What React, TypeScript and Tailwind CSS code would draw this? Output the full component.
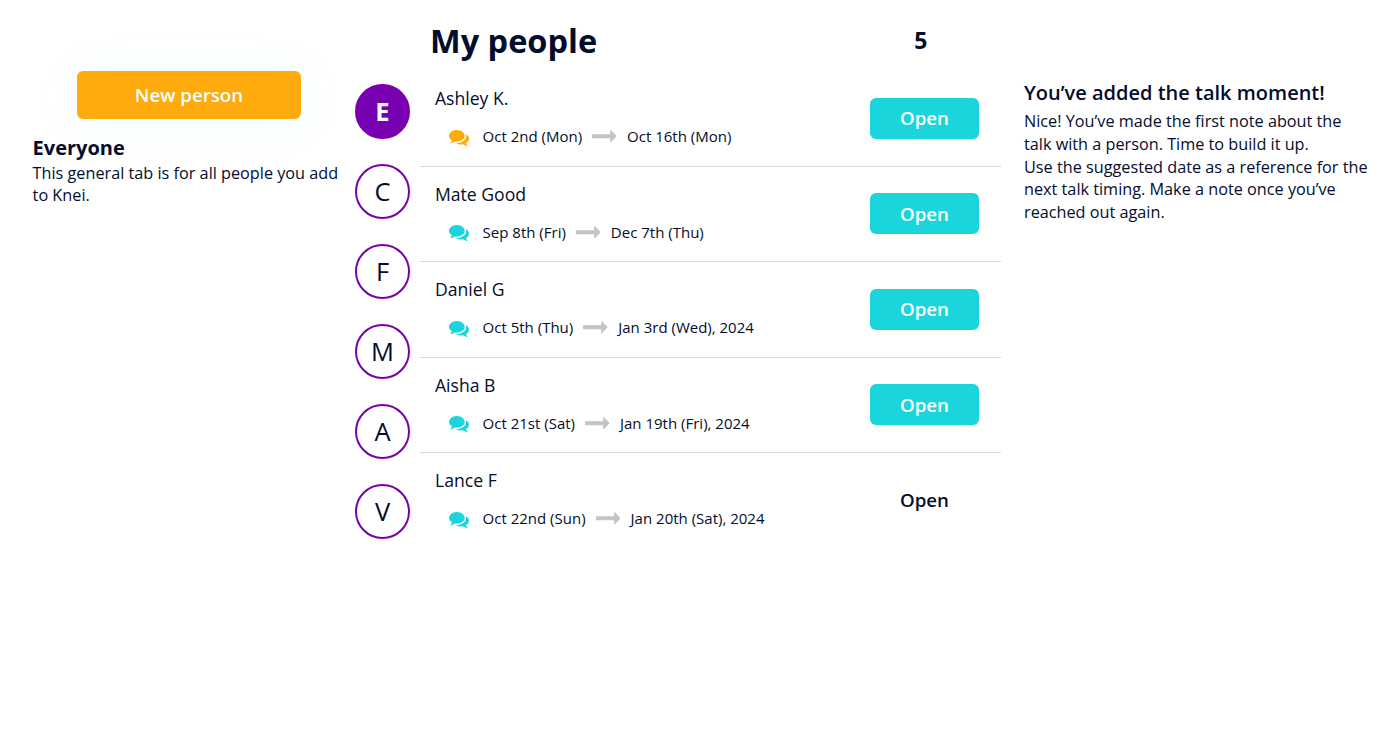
import type { ReactNode } from 'react';
import clsx from 'clsx';

interface Person {
  name: string;
  last: string;
  next: string;
  overdue?: boolean;
  plain?: boolean;
}

const groups = ['E', 'C', 'F', 'M', 'A', 'V'];

const people: Person[] = [
  { name: 'Ashley K.', last: 'Oct 2nd (Mon)', next: 'Oct 16th (Mon)', overdue: true },
  { name: 'Mate Good', last: 'Sep 8th (Fri)', next: 'Dec 7th (Thu)' },
  { name: 'Daniel G', last: 'Oct 5th (Thu)', next: 'Jan 3rd (Wed), 2024' },
  { name: 'Aisha B', last: 'Oct 21st (Sat)', next: 'Jan 19th (Fri), 2024' },
  { name: 'Lance F', last: 'Oct 22nd (Sun)', next: 'Jan 20th (Sat), 2024', plain: true },
];

function Icon({ className, viewBox, children }: { className?: string; viewBox: string; children: ReactNode }) {
  return (
    <svg className={className} fill="currentColor" viewBox={viewBox} preserveAspectRatio="none">
      {children}
    </svg>
  );
}

function CommentsIcon({ className }: { className?: string }) {
  return (
    <Icon className={className} viewBox="0 256 1792 1408">
      <path d="M1408 768q0 139-94 257t-256.5 186.5-353.5 68.5q-86 0-176-16-124 88-278 128-36 9-86 16h-3q-11 0-20.5-8t-11.5-21q-1-3-1-6.5t.5-6.5 2-6l2.5-5 3.5-5.5 4-5 4.5-5 4-4.5q5-6 23-25t26-29.5 22.5-29 25-38.5 20.5-44q-124-72-195-177t-71-224q0-139 94-257t256.5-186.5 353.5-68.5 353.5 68.5 256.5 186.5 94 257zm384 256q0 120-71 224.5t-195 176.5q10 24 20.5 44t25 38.5 22.5 29 26 29.5 23 25q1 1 4 4.5t4.5 5 4 5 3.5 5.5l2.5 5 2 6 .5 6.5-1 6.5q-3 14-13 22t-22 7q-50-7-86-16-154-40-278-128-90 16-176 16-271 0-472-132 58 4 88 4 161 0 309-45t264-129q125-92 192-212t67-254q0-77-23-152 129 71 204 178t75 230z" />
    </Icon>
  );
}

function ArrowIcon({ className }: { className?: string }) {
  return (
    <Icon className={className} viewBox="0 512 1728 768">
      <path d="M1728 893q0 14-10 24l-384 354q-16 14-35 6-19-9-19-29v-224h-1248q-14 0-23-9t-9-23v-192q0-14 9-23t23-9h1248v-224q0-21 19-29t35 5l384 350q10 10 10 23z" />
    </Icon>
  );
}

function PersonRow({ person }: { person: Person }) {
  return (
    <li className="flex h-[95.5px] items-center border-b border-[#d9d9e0] pr-[22px] pl-[15px] last:border-transparent">
      <div className="flex-1 pb-[3.1px]">
        <h3 className="text-[17.6px] leading-6">{person.name}</h3>
        <div className="mt-[15px] flex items-center pl-[14px] text-[15px] leading-[22px]">
          <CommentsIcon
            className={clsx('mt-[3px] mr-[13.6px] h-4 w-5', person.overdue ? 'text-[#ffaa0d]' : 'text-[#1ad5dc]')}
          />
          <span>{person.last}</span>
          <ArrowIcon className="mt-px mr-[10.5px] ml-[10px] h-[12.5px] w-[24.5px] text-[#c4c4c4]" />
          <span>{person.next}</span>
        </div>
      </div>
      <button
        type="button"
        className={clsx(
          'h-[41px] w-[109px] rounded-md text-[18.7px] font-semibold',
          person.plain ? 'text-[#040d2c]' : 'bg-[#1ad5dc] text-white',
        )}
      >
        Open
      </button>
    </li>
  );
}

export default function App() {
  return (
    <div className="flex min-h-[747px] bg-white font-['Open_Sans',sans-serif] text-[#040d2c]">
      <aside className="w-[355px] pt-[71px] pl-[32.6px]">
        <button
          type="button"
          className="ml-[44.4px] block h-12 w-56 rounded-md bg-[#ffaa0d] text-[18.7px] font-semibold text-white shadow-[0_4px_50px_rgba(26,213,220,0.06)]"
        >
          New person
        </button>
        <h2 className="mt-[15px] text-xl leading-7 font-bold">Everyone</h2>
        <p className="w-[315px] text-[16.24px] leading-[22px]">This general tab is for all people you add to Knei.</p>
      </aside>

      <nav className="flex w-[65px] flex-col gap-[25px] pt-[84px]">
        {groups.map((letter, i) => (
          <button
            key={letter}
            type="button"
            className={clsx(
              'h-[55px] w-[55px] rounded-full border-2 border-[#7700b0] pb-px text-[25.5px]',
              i === 0 && 'bg-[#7700b0] font-bold text-white',
            )}
          >
            {letter}
          </button>
        ))}
      </nav>

      <main className="w-[581px]">
        <header className="flex h-[71px] items-center justify-between pt-[10px] pr-[73.5px] pl-[10px]">
          <h1 className="text-[32.5px] leading-[46px] font-bold">My people</h1>
          <span className="pb-px text-[23px] font-bold">{people.length}</span>
        </header>
        <ul>
          {people.map((p) => (
            <PersonRow key={p.name} person={p} />
          ))}
        </ul>
      </main>

      <aside className="w-[380px] pt-[79px] pl-[23px]">
        <h2 className="text-xl leading-7 font-semibold">You’ve added the talk moment!</h2>
        <p className="mt-[3px] w-[346px] text-[16.24px] leading-[22.8px]">
          Nice! You’ve made the first note about the talk with a person. Time to build it up.
          <br />
          Use the suggested date as a reference for the next talk timing. Make a note once you’ve reached out again.
        </p>
      </aside>
    </div>
  );
}
